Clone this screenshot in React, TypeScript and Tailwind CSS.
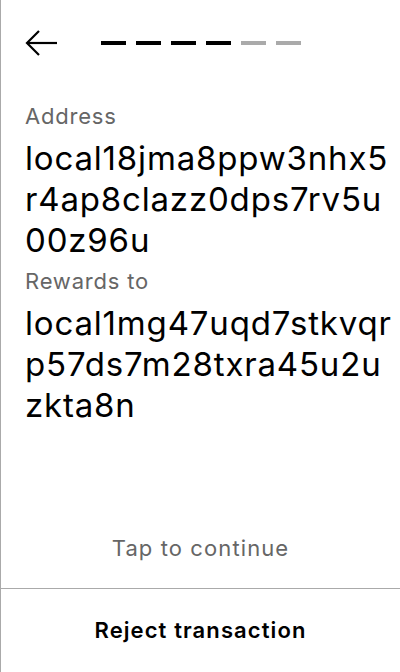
const address = ["local18jma8ppw3nhx5", "r4ap8clazz0dps7rv5u", "00z96u"];
const rewardsTo = ["local1mg47uqd7stkvqr", "p57ds7m28txra45u2u", "zkta8n"];

export default function App() {
  const steps = [true, true, true, true, false, false];
  return (
    <div
      className="flex h-[672px] w-[400px] flex-col border-l border-[#aaaaaa] bg-white text-black"
      style={{ fontFamily: "Inter, 'Noto Sans', sans-serif" }}
    >
      <div className="flex h-[86px] items-center pl-6">
        <svg width="34" height="28" viewBox="0 0 34 28" fill="none" stroke="black" strokeWidth="2.2">
          <path d="M32 14H2" />
          <path d="M14 2L2 14l12 12" />
        </svg>
        <div className="ml-[42px] flex gap-[10px]">
          {steps.map((on, i) => (
            <div key={i} className={on ? "h-1 w-[25px] bg-black" : "h-1 w-[25px] bg-[#aaaaaa]"} />
          ))}
        </div>
      </div>
      <div className="flex-1 pl-6 pr-2 pt-4 tracking-[0.05em]">
        <p className="text-[22px] leading-7 text-[#666666]">Address</p>
        <div className="mt-2 text-[33px] leading-[41px] tracking-[0.025em]">
          {address.map((l) => (
            <div key={l} className="whitespace-nowrap">{l}</div>
          ))}
        </div>
        <p className="mt-[6px] text-[22px] leading-7 text-[#666666]">Rewards to</p>
        <div className="mt-2 text-[33px] leading-[41px] tracking-[0.025em]">
          {rewardsTo.map((l) => (
            <div key={l} className="whitespace-nowrap">{l}</div>
          ))}
        </div>
      </div>
      <div className="flex h-[80px] items-center justify-center text-[22px] tracking-[0.05em] text-[#666666]">
        Tap to continue
      </div>
      <button className="h-[84px] border-t border-[#aaaaaa] text-[22px] font-semibold tracking-[0.05em]">
        Reject transaction
      </button>
    </div>
  );
}
